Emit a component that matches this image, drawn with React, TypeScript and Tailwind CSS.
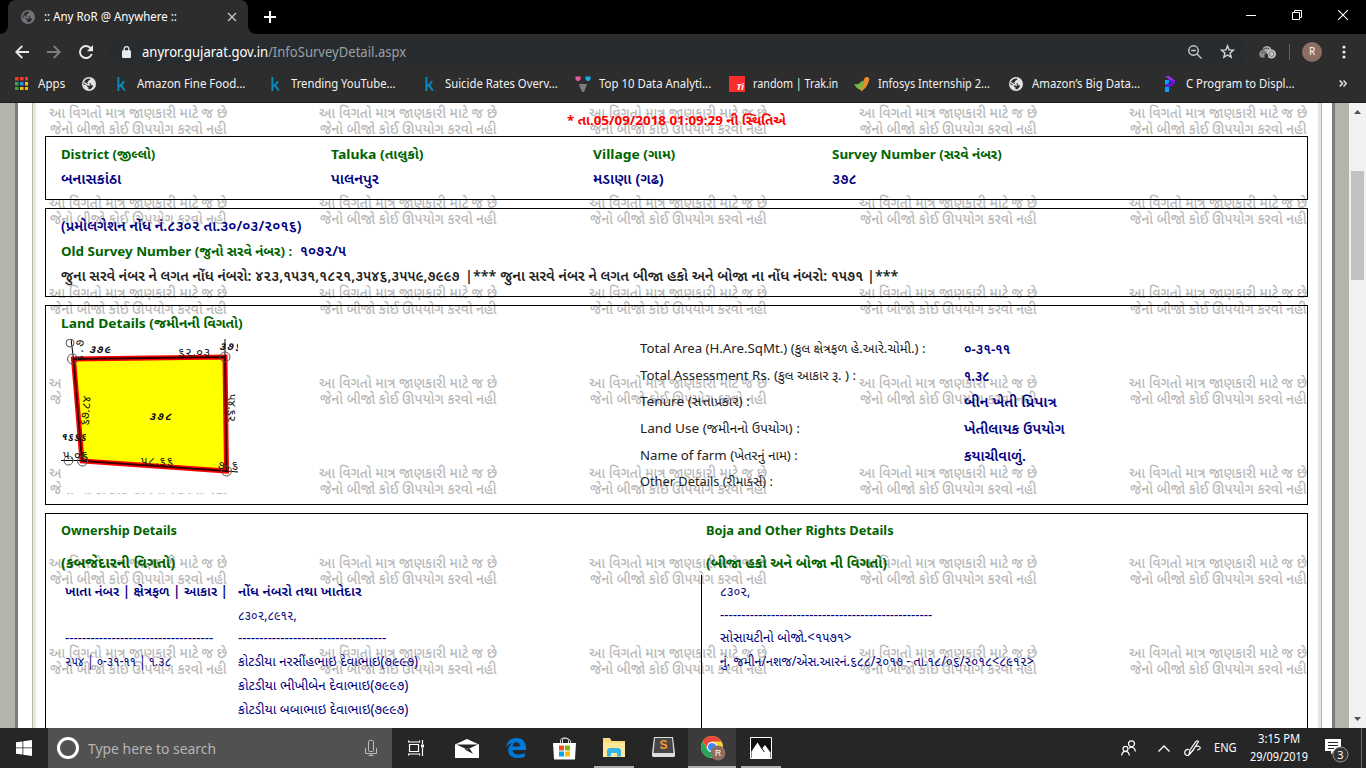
import { useLayoutEffect, useRef, useState, type ReactNode } from "react";

/** A single line of text condensed or expanded horizontally to a known advance width. */
function Fit({ w, className = "", children }: { w: number; className?: string; children: ReactNode }) {
  const ref = useRef<HTMLSpanElement>(null);
  const [scale, setScale] = useState(1);
  useLayoutEffect(() => {
    if (ref.current) setScale(w / ref.current.offsetWidth);
  }, [w]);
  return (
    <span className={`flex shrink-0 items-center ${className}`} style={{ width: w }}>
      <span ref={ref} className="inline-block origin-left whitespace-pre" style={{ transform: `scaleX(${scale})` }}>
        {children}
      </span>
    </span>
  );
}

const GREEN = "font-bold text-[#006400]";
const NAVY = "font-semibold text-[14px] pb-[2px] text-[#000080]";

function Globe({ className = "" }: { className?: string }) {
  return (
    <svg viewBox="0 0 14 14" className={`h-[14px] w-[14px] shrink-0 ${className}`}>
      <circle cx="7" cy="7" r="7" fill="currentColor" />
      <path
        d="M8.300 1.500 8 3.200 6.300 3.800 6 5.300 4.600 5.800 6.300 6.300H8.600L9.300 8.200H10.500L11 9.600 9 11.800 7 12.600 6.500 12.200V10.600L5.200 9.800V8.400L1.400 7.600C1.300 4.400 4.200 1.400 7 1.400Z"
        fill="#2d2d2d"
      />
      <path d="M2.200 5.500 4.500 7.300 7.200 8 6.500 5.600 8 3.800 10 3.600" stroke="currentColor" strokeWidth="1.500" fill="none" />
    </svg>
  );
}

function Kaggle() {
  return (
    <svg viewBox="0 0 10 14" className="h-[14px] w-[10px] shrink-0" fill="none" stroke="#0a8cc0" strokeWidth="1.900">
      <path d="M2.400 0V14M8.200 4.400 3.400 9.600M5 8 8.800 13.600" />
    </svg>
  );
}

function TabBar() {
  return (
    <div className="flex h-[34px] bg-black">
      <div className="h-[34px] w-[8px] bg-[#2d2d2d]">
        <div className="h-[34px] w-[8px] rounded-br-[8px] bg-black" />
      </div>
      <div className="flex w-[240px] items-center rounded-t-[8px] bg-[#2d2d2d] pl-[13px]">
        <Globe className="text-[#707378]" />
        <Fit w={133} className="ml-[9px] text-[12px] text-white">:: Any RoR @ Anywhere ::</Fit>
        <svg viewBox="0 0 10 10" className="ml-[50px] h-[10px] w-[10px] shrink-0" stroke="#c4c4c4" strokeWidth="1.400">
          <path d="m1 1 8 8M9 1 1 9" />
        </svg>
      </div>
      <div className="h-[34px] w-[8px] bg-[#2d2d2d]">
        <div className="h-[34px] w-[8px] rounded-bl-[8px] bg-black" />
      </div>
      <svg viewBox="0 0 12 12" className="mt-[11px] ml-[8px] h-[12px] w-[12px]" stroke="#fff" strokeWidth="2">
        <path d="M6 0v12M0 6h12" />
      </svg>
      <div className="ml-auto flex h-[29px] items-center pr-[18px]">
        <svg viewBox="0 0 10 10" className="h-[10px] w-[10px]" stroke="#fff">
          <path d="M0 5.500h10" />
        </svg>
        <svg viewBox="0 0 10 10" className="ml-[36px] h-[10px] w-[10px]" fill="none" stroke="#fff">
          <path d="M.5 2.500h7v7h-7zM2.500 2.500V.5h7v7h-2" />
        </svg>
        <svg viewBox="0 0 10 10" className="ml-[36px] h-[10px] w-[10px]" stroke="#fff" strokeWidth="1.100">
          <path d="m0 0 10 10M10 0 0 10" />
        </svg>
      </div>
    </div>
  );
}

function Toolbar() {
  return (
    <div className="flex h-[34px] items-center bg-[#2d2d2d] pt-px">
      <svg viewBox="0 0 14 14" className="ml-[15px] h-[14px] w-[14px]" fill="none" stroke="#e8e8e8" strokeWidth="1.900">
        <path d="M14 7H1.500M7.300.8 1.300 7l6 6.200" />
      </svg>
      <svg viewBox="0 0 14 14" className="ml-[18px] h-[14px] w-[14px]" fill="none" stroke="#7e7e7e" strokeWidth="1.900">
        <path d="M0 7h12.500M6.700.8l6 6.200-6 6.200" />
      </svg>
      <svg viewBox="0 0 14 14" className="ml-[18px] h-[14px] w-[14px]" fill="none" stroke="#e8e8e8" strokeWidth="2">
        <path d="M12 3.700A6 6 0 1 0 12.700 9" />
        <path d="M14 0v6.200H7.800Z" fill="#e8e8e8" stroke="none" />
      </svg>
      <div className="ml-[15px] flex h-[28px] w-[1138px] items-center rounded-full bg-[#282c2f]">
        <svg viewBox="0 0 9 12" className="ml-[14px] h-[12px] w-[9px]" fill="none">
          <rect y="4.300" width="9" height="7.700" rx="1" fill="#e8eaed" />
          <path d="M2.200 5V3a2.300 2.300 0 0 1 4.600 0v2" stroke="#e8eaed" strokeWidth="1.300" />
        </svg>
        <div className="ml-[11px] flex text-[14px]">
          <Fit w={126} className="text-white">anyror.gujarat.gov.in</Fit>
          <Fit w={138} className="text-[#9aa0a6]">/InfoSurveyDetail.aspx</Fit>
        </div>
        <svg viewBox="0 0 14 14" className="ml-auto h-[14px] w-[14px]" fill="none" stroke="#c9ccd0" strokeWidth="1.400">
          <circle cx="5.500" cy="5.500" r="4.700" />
          <path d="m9 9 4.600 4.600M3.200 5.500h4.600" />
        </svg>
        <svg viewBox="0 0 16 15" className="mr-[11px] ml-[18px] h-[15px] w-[15px]" fill="none" stroke="#d5d7d9" strokeWidth="1.500">
          <path d="m8 1.500 1.700 4.300 4.600.3-3.500 3 1.100 4.500L8 11.200l-3.900 2.400 1.100-4.500-3.500-3 4.600-.3Z" />
        </svg>
      </div>
      <svg viewBox="0 0 17 14" className="ml-[13px] h-[14px] w-[17px]">
        <circle cx="8" cy="5.500" r="4.500" fill="#a9a9a9" />
        <circle cx="4" cy="9" r="3.800" fill="#8c8c8c" />
        <path d="M4 5.300a4 4 0 0 1 6-1.300M2.500 8.200a2.500 2.500 0 0 1 4-.500" fill="none" stroke="#4a4a4a" />
        <circle cx="12.500" cy="9" r="4.500" fill="#c4c4c4" />
        <circle cx="12.500" cy="9" r="2.500" fill="none" stroke="#777" />
        <path d="M5.500 13V9.500l2-1.500 1.500 2V13Z" fill="#2d2d2d" />
      </svg>
      <div className="ml-[13px] h-[16px] w-px bg-[#5f6062]" />
      <div className="ml-[12px] flex h-[20px] w-[20px] items-center justify-center rounded-full bg-[#8d6e63] text-[10px] text-white">R</div>
      <svg viewBox="0 0 4 14" className="ml-[20px] h-[14px] w-[4px]" fill="#e8e8e8">
        <circle cx="2" cy="2" r="1.600" />
        <circle cx="2" cy="7" r="1.600" />
        <circle cx="2" cy="12" r="1.600" />
      </svg>
    </div>
  );
}

const APP_DOTS = ["#f4372f", "#f4372f", "#f4372f", "#34a853", "#2f8df5", "#fbbc05", "#34a853", "#fbbc05", "#fbbc05"];

function Bookmarks() {
  return (
    <div className="flex h-[35px] items-center border-b border-[#1c1c1c] bg-[#2d2d2d] pb-[3px] text-[12px] text-[#f1f1f1]">
      <svg viewBox="0 0 13 13" className="ml-[15px] h-[13px] w-[13px]">
        {APP_DOTS.map((c, i) => (
          <rect key={i} x={(i % 3) * 5} y={Math.floor(i / 3) * 5} width="3.500" height="3.500" fill={c} />
        ))}
      </svg>
      <Fit w={27} className="ml-[10px]">Apps</Fit>
      <Globe className="ml-[17px] text-[#e2e2e2]" />
      <div className="ml-[20px] flex w-[154px] items-center">
        <Kaggle />
        <Fit w={108} className="ml-[11px]">Amazon Fine Food...</Fit>
      </div>
      <div className="flex w-[154px] items-center">
        <Kaggle />
        <Fit w={105} className="ml-[11px]">Trending YouTube...</Fit>
      </div>
      <div className="flex w-[151px] items-center">
        <Kaggle />
        <Fit w={113} className="ml-[11px]">Suicide Rates Overv...</Fit>
      </div>
      <svg viewBox="0 0 16 16" className="h-[16px] w-[16px]">
        <path d="M.500.500h5v3L3.800 5H2.200L.500 3.500Z" fill="#e85d9b" />
        <path d="M10.500.500h5v3L13.800 5h-1.600l-1.700-1.500Z" fill="#12b5e5" />
        <path d="M4 8h8l-1 3.500L8.800 16H7.200L5 11.500Z" fill="#7d7d7d" />
      </svg>
      <Fit w={112} className="ml-[8px]">Top 10 Data Analyti...</Fit>
      <div className="ml-[18px] flex h-[16px] w-[16px] items-end justify-end bg-[#fb2c2c] pr-[1px] text-[9px] leading-[11px] font-bold text-white italic">Ti</div>
      <Fit w={85} className="ml-[8px]">random | Trak.in</Fit>
      <svg viewBox="0 0 16 16" className="ml-[16px] h-[16px] w-[16px]">
        <path d="M0 8.500 4.500 8 8 5 11.500 5.500 12 9C11 13 8.500 14.500 6.500 14 4 13.500 2 11 0 8.500Z" fill="#79b643" />
        <path d="M7 13 10.500 8 9.500 4.500 11 1.500 13.500.800 15.500 3 14 7.500C12.500 11.500 10.500 12.500 7 16Z" fill="#ef8b27" />
      </svg>
      <Fit w={112} className="ml-[8px]">Infosys Internship 2...</Fit>
      <Globe className="ml-[19px] text-[#e2e2e2]" />
      <Fit w={108} className="ml-[9px]">Amazon’s Big Data...</Fit>
      <svg viewBox="0 0 10 16" className="ml-[25px] h-[16px] w-[10px]">
        <path d="M0 0h4l6 4.500V7L6.500 5 4.500 4Z" fill="#9b2df2" />
        <path d="M10 5V7L5 11H.500V8.500L6 7.500 4.500 4Z" fill="#6514e8" />
        <path d="M0 4h4v3L0 9ZM0 11h4v5H0Z" fill="#09a5f5" />
      </svg>
      <Fit w={109} className="ml-[11px]">C Program to Displ...</Fit>
      <svg viewBox="0 0 8 7" className="mr-[19px] ml-auto h-[7px] w-[8px]" fill="none" stroke="#e6e6e6" strokeWidth="1.500">
        <path d="M.7.500 3.500 3.500.7 6.500M4.500.500 7.300 3.500 4.500 6.500" />
      </svg>
    </div>
  );
}

/** Disclaimer repeated behind the page on a 270 × 90 grid. */
function Watermark() {
  return (
    <div className="absolute inset-y-0 left-[13px] w-[1258px] overflow-hidden">
      <div className="grid w-[1350px] auto-rows-[90px] grid-cols-[repeat(5,270px)]">
        {Array.from({ length: 35 }, (_, i) => (
          <div key={i} className="text-[15px] leading-[16px] font-medium text-[#b8b8b8]">
            <Fit w={178} className="mt-px h-[16px]">આ વિગતો માત્ર જાણકારી માટે જ છે</Fit>
            <Fit w={177} className="ml-px h-[16px]">જેનો બીજો કોઈ ઊપયોગ કરવો નહી</Fit>
          </div>
        ))}
      </div>
    </div>
  );
}

function PlotMap() {
  return (
    <svg viewBox="61 339 177 154" className="h-[154px] w-[177px] shrink-0 bg-white">
      <path d="M73.500 359 225 357 226.500 471 82 461Z" fill="#ff0" stroke="#f00" strokeWidth="5" />
      <path d="M73.500 359 225 357 226.500 471 82 461Z" fill="none" stroke="#300" strokeWidth="1.800" />
      <path d="M71 339 73.500 359M225 339V357M226.500 471 238 472M61 460.500H82V452" stroke="#000" fill="none" />
      <g fill="none" stroke="#555" strokeWidth="1">
        <circle cx="70" cy="343" r="4" />
        <circle cx="72.500" cy="359" r="5" />
        <circle cx="225" cy="357" r="5" />
        <circle cx="226.500" cy="471" r="5" />
        <circle cx="82.500" cy="461" r="5" />
        <circle cx="68.500" cy="460.500" r="4.500" />
      </g>
      <g fill="#111" fontSize="12" fontFamily="Noto Sans Gujarati, Noto Sans, sans-serif">
        <text x="89" y="353" fontSize="11" fontStyle="italic" fontWeight="bold" textLength="21">૩૭૯</text>
        <text x="178" y="356" textLength="32">૬૨.૦૩</text>
        <text x="219" y="350" fontSize="11" fontStyle="italic" fontWeight="bold" textLength="22">૩૭૬</text>
        <text x="149" y="420" fontSize="11" fontStyle="italic" fontWeight="bold" textLength="22">૩૭૮</text>
        <text x="141" y="465" textLength="32">૫૮.૬૬</text>
        <text x="61" y="440" fontSize="10" fontStyle="italic" fontWeight="bold" textLength="25">૧૬૬૬</text>
        <text x="63" y="459" textLength="25">૫.૦૬</text>
        <text x="218" y="469" textLength="20">૭.૬</text>
        <text transform="translate(88 426) rotate(-85)" textLength="30">૬૭.૮૪</text>
        <text transform="translate(228 394) rotate(90)" textLength="28">૫૪.૬૨</text>
        <text transform="translate(82 362) rotate(-85)" textLength="22">૬.૭</text>
      </g>
    </svg>
  );
}

const PLACE = [
  { w: 270, label: "District (જીલ્લો)", lw: 94, value: "બનાસકાંઠા", vw: 60 },
  { w: 262, label: "Taluka (તાલુકો)", lw: 92, value: "પાલનપુર", vw: 48 },
  { w: 239, label: "Village (ગામ)", lw: 82, value: "મડાણા (ગઢ)", vw: 71 },
  { w: 300, label: "Survey Number (સરવે નંબર)", lw: 170, value: "૩૭૮", vw: 25 },
];

const LAND = [
  { label: "Total Area (H.Are.SqMt.) (કુલ ક્ષેત્રફળ હે.આરે.ચોમી.) :", lw: 286, value: "૦-૩૧-૧૧", vw: 46 },
  { label: "Total Assessment Rs. (કુલ આકાર રૂ. ) :", lw: 216, value: "૧.૩૮", vw: 26 },
  { label: "Tenure (સત્તાપ્રકાર) :", lw: 110, value: "બીન ખેતી પ્રિપાત્ર", vw: 93 },
  { label: "Land Use (જમીનનો ઉપયોગ) :", lw: 160, value: "ખેતીલાયક ઉપયોગ", vw: 101 },
  { label: "Name of farm (ખેતરનું નામ) :", lw: 158, value: "કયાચીવાળું.", vw: 62 },
  { label: "Other Details (રીમાર્ક્સ) :", lw: 133, value: "", vw: 0 },
];

function Page() {
  return (
    <div className="flex h-[625px] overflow-hidden bg-[#b3b4ab]">
      <div className="ml-[15px] flex w-[1320px] border-r-[3px] border-l-[3px] border-[#7b7e75] bg-white pr-[10px] pl-[14px]">
        <div className="relative w-[1290px] border-x border-[#b7b9a4]">
          <div className="h-full border-x-[3px] border-[#e6e7e0] bg-white" />
          <div className="absolute inset-y-0 right-0 left-[3px] overflow-hidden font-['Noto_Sans','Noto_Sans_Gujarati',sans-serif]">
            <Watermark />
            <div className="relative pl-[9px] text-[13px] text-[#222]">
              <div className="flex h-[33px] items-center pt-[2px] pl-[522px]">
                <Fit w={219} className="font-bold text-[#f00]">* તા.05/09/2018 01:09:29 ની સ્થિતિએ</Fit>
              </div>

              <section className="flex h-[64px] w-[1263px] border border-black pt-[5px] pl-[14.500px]">
                {PLACE.map((p) => (
                  <div key={p.label} style={{ width: p.w }}>
                    <Fit w={p.lw} className={`h-[25px] ${GREEN}`}>{p.label}</Fit>
                    <Fit w={p.vw} className={`h-[25px] ${NAVY}`}>{p.value}</Fit>
                  </div>
                ))}
              </section>

              <section className="mt-[8px] h-[89px] w-[1263px] border border-black pt-[5px] pl-[14.500px]">
                <Fit w={240} className={`h-[25px] ${NAVY}`}>(પ્રમોલગેશન નોંધ નં.૮૩૦૨ તા.૩૦/૦૩/૨૦૧૬)</Fit>
                <div className="flex h-[25px]">
                  <Fit w={231} className={GREEN}>Old Survey Number (જુનો સરવે નંબર) :</Fit>
                  <Fit w={46} className={`ml-[8px] ${NAVY}`}>૧૦૭૨/૫</Fit>
                </div>
                <div className="-mt-px flex h-[25px] text-[14px] font-semibold">
                  <Fit w={399}>જુના સરવે નંબર ને લગત નોંધ નંબરો: ૪૨૩,૧૫૩૧,૧૮૨૧,૩૫૪૬,૩૫૫૯,૭૯૯૭</Fit>
                  <Fit w={433} className="ml-[5px]">|*** જુના સરવે નંબર ને લગત બીજા હકો અને બોજા ના નોંધ નંબરો: ૧૫૭૧ |***</Fit>
                </div>
              </section>

              <section className="mt-[8px] h-[200px] w-[1263px] border border-black pt-[5px] pl-[15px]">
                <Fit w={182} className={`-ml-[0.500px] h-[25px] ${GREEN}`}>Land Details (જમીનની વિગતો)</Fit>
                <div className="flex pt-[3px]">
                  <PlotMap />
                  <div className="-mt-[3px] ml-[401.500px] text-[12.500px]">
                    {LAND.map((r) => (
                      <div key={r.label} className="flex h-[26.700px] items-center">
                        <div className="w-[324px]">
                          <Fit w={r.lw}>{r.label}</Fit>
                        </div>
                        {r.value && <Fit w={r.vw} className={NAVY}>{r.value}</Fit>}
                      </div>
                    ))}
                  </div>
                </div>
              </section>

              <section className="mt-[8px] flex h-[260px] w-[1263px] border border-black pt-[4px] pl-[15px]">
                <div className="w-[640px]">
                  <Fit w={116} className={`-ml-[0.500px] h-[25px] ${GREEN}`}>Ownership Details</Fit>
                  <Fit w={114} className={`mt-[7px] -ml-[0.500px] h-[25px] text-[14px] ${GREEN}`}>(કબજેદારની વિગતો)</Fit>
                  <div className="flex pt-[5px] pl-[4px] text-[13.500px] text-[#000080]">
                    <div className="w-[173px]">
                      <Fit w={163} className="h-[22px] font-semibold">ખાતા નંબર | ક્ષેત્રફળ | આકાર |</Fit>
                      <Fit w={148} className="mt-[26px] h-[20px]">-----------------------------------</Fit>
                      <Fit w={106} className="mt-[2px] h-[23px]">૨૫૪ | ૦-૩૧-૧૧ | ૧.૩૮</Fit>
                    </div>
                    <div>
                      <Fit w={123} className="h-[22px] font-semibold">નોંધ નંબરો તથા ખાતેદાર</Fit>
                      <Fit w={59} className="mt-px h-[24px]">૮૩૦૨,૮૯૧૨,</Fit>
                      <Fit w={148} className="mt-px h-[20px]">-----------------------------------</Fit>
                      <Fit w={180} className="mt-px h-[24px]">કોટડીયા નરસીંહભાઇ દેવાભાઇ(૭૯૯૭)</Fit>
                      <Fit w={170} className="h-[24px]">કોટડીયા ભીખીબેન દેવાભાઇ(૭૯૯૭)</Fit>
                      <Fit w={170} className="h-[24px]">કોટડીયા બબાભાઇ દેવાભાઇ(૭૯૯૭)</Fit>
                    </div>
                  </div>
                </div>
                <div className="pl-[5px]">
                  <Fit w={188} className={`-ml-[0.500px] h-[25px] ${GREEN}`}>Boja and Other Rights Details</Fit>
                  <Fit w={181} className={`mt-[7px] -ml-[0.500px] h-[25px] text-[14px] ${GREEN}`}>(બીજા હકો અને બોજા ની વિગતો)</Fit>
                  <div className="-ml-[5px] h-[200px] border-l border-black pt-[5px] pl-[18px] text-[13.500px] text-[#000080]">
                    <Fit w={30} className="h-[23px]">૮૩૦૨,</Fit>
                    <Fit w={212} className="mt-px h-[22px]">--------------------------------------------------</Fit>
                    <Fit w={132} className="h-[23px]">સોસાયટીનો બોજો.&lt;૧૫૭૧&gt;</Fit>
                    <Fit w={314} className="h-[24px]">નું. જમીન/નશજ/એસ.આરનં.૬૮૮/૨૦૧૭ - તા.૧૮/૦૬/૨૦૧૮&lt;૮૯૧૨&gt;</Fit>
                  </div>
                </div>
              </section>
            </div>
          </div>
        </div>
      </div>
      <div className="ml-auto flex w-[17px] flex-col items-center justify-between bg-[#f1f1f1] py-[7px]">
        <svg viewBox="0 0 7 4" className="h-[4px] w-[7px]" fill="#505050"><path d="M0 4 3.500 0 7 4Z" /></svg>
        <div className="mt-[57px] mb-auto h-[109px] w-[13px] bg-[#c1c1c1]" />
        <svg viewBox="0 0 7 4" className="h-[4px] w-[7px]" fill="#505050"><path d="M0 0h7L3.500 4Z" /></svg>
      </div>
    </div>
  );
}

function Taskbar() {
  return (
    <div className="flex h-[40px] bg-[#262626] text-white">
      <div className="flex w-[48px] items-center justify-center">
        <svg viewBox="0 0 16 16" className="h-[16px] w-[16px]" fill="#fff">
          <path d="M0 2.300 6.500 1.400V7.500H0ZM7.300 1.300 16 0V7.500H7.300ZM0 8.300H6.500V14.600L0 13.700ZM7.300 8.300H16V16L7.300 14.700Z" />
        </svg>
      </div>
      <div className="flex w-[344px] items-center bg-[#515151] pl-[9px]">
        <div className="h-[22px] w-[22px] rounded-full border-[3px] border-white" />
        <Fit w={128} className="ml-[9px] text-[15px] text-[#b5b5b5]">Type here to search</Fit>
        <svg viewBox="0 0 12 16" className="mr-[15px] ml-auto h-[16px] w-[12px]" fill="none" stroke="#bdbdbd">
          <rect x="3.500" y=".5" width="5" height="11" rx="1" />
          <path d="M.5 8v5.500h11V8M6 13.500V16M3.500 15.500h5" />
        </svg>
      </div>
      <div className="flex w-[48px] items-center justify-center">
        <svg viewBox="0 0 17 16" className="h-[16px] w-[17px]" fill="none" stroke="#fff" strokeWidth="1.200">
          <path d="M1.500 4.500h9v7h-9zM.600.500V2h11V.500M.600 15.500V14h11v1.500M14.500 0V4M14.500 8v8" />
          <path d="M13 4.500h3v3h-3z" fill="#fff" stroke="none" />
        </svg>
      </div>
      <div className="flex w-[54px] items-center justify-center">
        <svg viewBox="0 0 24 19" className="h-[19px] w-[24px]">
          <path d="M0 5.500 12 0 24 5.500V19H0Z" fill="#fff" />
          <path d="M1.500 5.500H23L12 10.500ZM9.500 10.500 18 14.800 14.500 9.300Z" fill="#262626" />
        </svg>
      </div>
      <div className="flex w-[44px] items-center justify-center">
        <svg viewBox="0 0 20 20" className="h-[20px] w-[20px]">
          <path
            d="M0 9.500C.600 3.500 5 0 10.500 0 16.500 0 20 4 20 9.800V12H6.500c.2 3 2.700 4.500 6 4.500 2.300 0 4.300-.6 6.200-1.700v4C16.700 19.800 14.200 20 11.500 20 6 20 2.200 17 2.200 12.200c0-3 1.700-5.800 4.800-7.200C3.800 5.300 1.500 7 0 9.500ZM6.600 8.500h7.200C13.800 5.500 12.500 4.300 10.300 4.300 8.300 4.300 6.900 5.800 6.600 8.500Z"
            fill="#0078d7"
            fillRule="evenodd"
          />
        </svg>
      </div>
      <div className="flex w-[53px] items-center justify-center">
        <svg viewBox="0 0 23 23" className="h-[23px] w-[23px]">
          <path d="M7.500 6V3.500C7.500 0 15.500 0 15.500 3.500V6M9.500 6V3C9.500.500 18 .500 17.800 6" fill="none" stroke="#ddd" />
          <path d="M0 6H23L22 22.500H1Z" fill="#fff" />
          <path d="M6 8.500h5v5H6z" fill="#f25022" />
          <path d="M12 8.500h5v5h-5z" fill="#7fba00" />
          <path d="M6 14.500h5v5H6z" fill="#00a4ef" />
          <path d="M12 14.500h5v5h-5z" fill="#ffb900" />
        </svg>
      </div>
      <div className="-ml-px flex w-[48px] justify-center">
        <div className="flex w-[40px] items-center justify-center border-b-2 border-[#b0b0b0]">
          <svg viewBox="0 0 22 19" className="h-[19px] w-[22px]">
            <path d="M0 0h7l1.500 3H22v16H0Z" fill="#fbdc7c" />
            <path d="M0 5h22v14H0Z" fill="#ffe89a" />
            <path d="M4 18.500V12l2-2h10l2 2v6.500h-4V15H8v3.500Z" fill="#35b5e9" />
          </svg>
        </div>
      </div>
      <div className="flex w-[50px] items-center justify-center pb-[2px]">
        <svg viewBox="0 0 23 20" className="h-[20px] w-[23px]">
          <path d="M2 0h19l2 16v3l-1 1H1l-1-1v-3Z" fill="#dedede" />
          <path d="M3 1h17l1.500 15h-20Z" fill="#474747" />
          <text x="7.500" y="12" fontSize="12" fontWeight="bold" fill="#ff9830" fontFamily="Liberation Sans">S</text>
        </svg>
      </div>
      <div className="flex w-[48px] items-center justify-center border-b-2 border-[#b0b0b0] bg-[#3b3b3b]">
        <svg viewBox="0 0 26 26" className="mt-[4px] ml-[2px] h-[26px] w-[26px]">
          <circle cx="12" cy="11" r="11" fill="#fdd03b" />
          <path d="M2.500 5.500A11 11 0 0 1 21.500 5.500H12L8 13Z" fill="#e9493b" />
          <path d="M2.500 5.500A11 11 0 0 0 11 22l4.500-8H8Z" fill="#27a55a" />
          <circle cx="12" cy="11" r="5.200" fill="#fff" />
          <circle cx="12" cy="11" r="4" fill="#4285f4" />
          <circle cx="18" cy="17" r="7.500" fill="#8d6e63" />
          <text x="15" y="20" fontSize="8.500" fontFamily="Liberation Sans" fill="#fff">R</text>
        </svg>
      </div>
      <div className="ml-[5px] flex w-[40px] items-center justify-center border-b-2 border-[#b0b0b0]">
        <svg viewBox="0 0 22 22" className="mt-[1px] h-[22px] w-[22px]">
          <path d="M.5.5h21v21H.5z" fill="#111" stroke="#fff" />
          <path d="M1.500 14.500 7.500 5.500l6 9.500V21h-12Z" fill="#fff" />
          <path d="m11.500 12 3.500-4 5.500 7.500V21h-9Z" fill="#fff" />
          <path d="m11.300 10.500 3 4.500" stroke="#111" />
        </svg>
      </div>

      <div className="ml-auto flex items-center">
        <svg viewBox="0 0 15 16" className="h-[16px] w-[15px]" fill="none" stroke="#fff" strokeWidth="1.200">
          <circle cx="10.500" cy="3.800" r="3" />
          <circle cx="4.500" cy="8.800" r="2.500" />
          <path d="M.800 15.500c0-5.500 7.400-5.500 7.400 0M8 8.500c2-2.500 6.300-1 6.300 3" />
        </svg>
        <svg viewBox="0 0 12 7" className="ml-[22px] h-[7px] w-[12px]" fill="none" stroke="#fff" strokeWidth="1.300">
          <path d="M.5 6.500 6 1l5.500 5.500" />
        </svg>
        <svg viewBox="0 0 17 17" className="ml-[14px] h-[17px] w-[17px]" fill="none" stroke="#fff" strokeWidth="1.200">
          <path d="M5 14.500 6 10 12 1.500q1.500-1.500 2.500 0L8.500 11ZM5 9.500c-5-.5-5.500 5-2 6 3 .5 4.500-4 8-8.500M11.500 6.500c6-2 6 3.500 1.500 3.500" />
        </svg>
        <Fit w={23} className="ml-[13px] text-[12px]">ENG</Fit>
        <div className="ml-[12px] flex w-[60px] flex-col items-center text-[12px] leading-[18px]">
          <Fit w={42}>3:15 PM</Fit>
          <Fit w={58}>29/09/2019</Fit>
        </div>
        <svg viewBox="0 0 24 25" className="mt-[5px] ml-[16px] h-[25px] w-[24px]">
          <path d="M0 1h16v12H9l-3 3.500V13H0Z" fill="#fff" />
          <path d="M3 4.500h10M3 7.500h10M3 10.500h6" stroke="#262626" />
          <circle cx="15.500" cy="16.500" r="7.500" fill="#333" stroke="#999" />
          <text x="12.300" y="20.500" fontSize="11" fontFamily="Noto Sans" fill="#fff">3</text>
        </svg>
        <div className="ml-[12px] h-[40px] w-px bg-[#6b6b6b]" />
        <div className="w-[4px]" />
      </div>
    </div>
  );
}

export default function App() {
  return (
    <div className="h-[768px] w-[1366px] overflow-hidden font-['Noto_Sans',sans-serif]">
      <TabBar />
      <Toolbar />
      <Bookmarks />
      <Page />
      <Taskbar />
    </div>
  );
}
